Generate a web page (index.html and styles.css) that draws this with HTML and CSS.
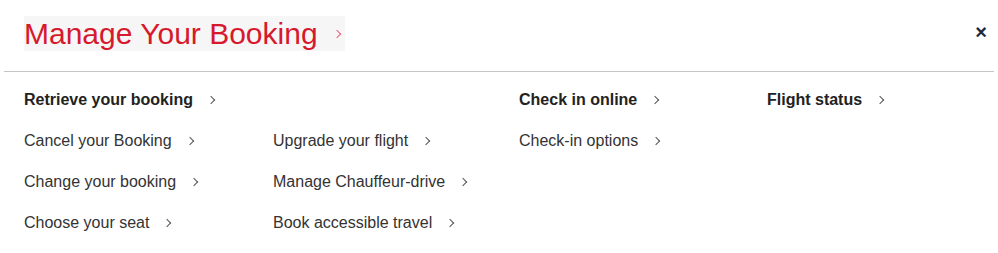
FILE: index.html
```html
<!doctype html>
<html><head><meta charset="UTF-8"><link rel="stylesheet" href="styles.css"></head>
<body>
  <div class='entete'>
    <a class='titre' href='#'>Manage Your Booking <span class='chev chevRouge'></span></a>
    <a class='fermer' href='#'>&times;</a>
  </div>
  <div class='menu'>
    <div class='col'>
      <a class='lien gras' href='#'>Retrieve your booking<span class='chev'></span></a>
      <a class='lien' href='#'>Cancel your Booking<span class='chev'></span></a>
      <a class='lien' href='#'>Change your booking<span class='chev'></span></a>
      <a class='lien' href='#'>Choose your seat<span class='chev'></span></a>
    </div>
    <div class='col'>
      <div class='lien vide'></div>
      <a class='lien' href='#'>Upgrade your flight<span class='chev'></span></a>
      <a class='lien' href='#'>Manage Chauffeur-drive<span class='chev'></span></a>
      <a class='lien' href='#'>Book accessible travel<span class='chev'></span></a>
    </div>
    <div class='col'>
      <a class='lien gras' href='#'>Check in online<span class='chev'></span></a>
      <a class='lien' href='#'>Check-in options<span class='chev'></span></a>
    </div>
    <div class='col'>
      <a class='lien gras' href='#'>Flight status<span class='chev'></span></a>
    </div>
  </div>
</body></html>
```
FILE: styles.css
```css
* {box-sizing: border-box;}
body {margin:0;background:white;font-family:"Liberation Sans",Arial,sans-serif;color:#333;}
a {text-decoration:none;color:inherit;}
.entete {display:flex;justify-content:space-between;align-items:center;margin:0 4px;padding:16px 7px 20px 20px;border-bottom:1px solid #c4c4c4;}
.titre {display:flex;align-items:center;background:#f6f6f6;color:#d7192d;font-size:30px;height:35px;width:321px;line-height:35px;}
.chevRouge {border-color:#e8607a !important;margin-left:16px !important;}
.fermer {font-size:20px;font-weight:bold;color:#1b2a3e;line-height:20px;margin-top:-4px;}
.menu {display:grid;grid-template-columns:249px 246px 248px 1fr;padding:7px 0 0 24px;}
.col {display:flex;flex-direction:column;}
.lien {display:flex;align-items:center;height:41px;font-size:16px;color:#333;}
.gras {font-weight:bold;color:#222;}
.chev {display:inline-block;width:6px;height:6px;border-top:1.3px solid #555;border-right:1.3px solid #555;transform:rotate(45deg);margin-left:15px;}
```
